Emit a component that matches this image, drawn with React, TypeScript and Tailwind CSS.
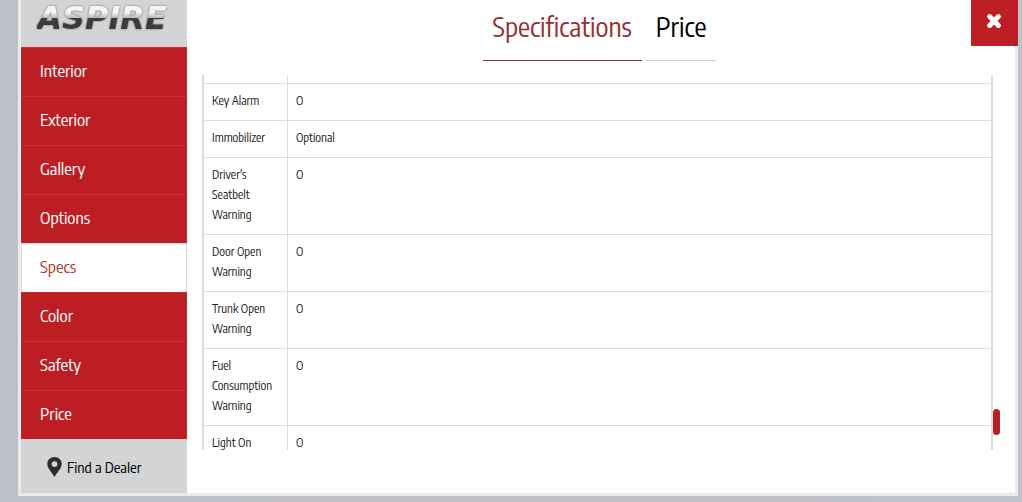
import { useState } from "react";

const sections = ["Interior", "Exterior", "Gallery", "Options", "Specs", "Color", "Safety", "Price"];
const tabs = ["Specifications", "Price"];

const specs = [
  { name: "Key Alarm", value: "O" },
  { name: "Immobilizer", value: "Optional" },
  { name: "Driver's Seatbelt Warning", value: "O" },
  { name: "Door Open Warning", value: "O" },
  { name: "Trunk Open Warning", value: "O" },
  { name: "Fuel Consumption Warning", value: "O" },
  { name: "Light On", value: "O" },
];

function Sidebar() {
  const [active, setActive] = useState("Specs");
  return (
    <aside className="flex w-[166px] shrink-0 flex-col bg-[#d2d4d5]">
      <div className="flex h-[47px] items-start justify-center">
        <span className="bg-linear-to-b from-[#f4f4f4] from-35% via-[#b4b6b8] via-50% to-[#3b3c3e] to-50% bg-clip-text pr-1 font-['DejaVu_Sans',sans-serif] text-[32px] leading-9 font-bold text-transparent italic drop-shadow-[0_0_1px_#707274]">
          ASPIRE
        </span>
      </div>
      <nav aria-label="Sections">
        {sections.map((name) => (
          <a
            key={name}
            href={"#" + name.toLowerCase()}
            onClick={() => setActive(name)}
            className={
              name === active
                ? "flex h-[49px] items-center border-x border-t border-[#dcdcdc] bg-white px-[18px] pb-0.5 text-[17px] text-[#b23a2e]"
                : "flex h-[49px] items-center border-x border-t border-[#b82a2a] border-t-[#d42c27] bg-[#bd1e23] px-[18px] pb-0.5 text-[17px] text-white"
            }
          >
            {name}
          </a>
        ))}
      </nav>
      <a href="#dealer" className="flex flex-1 items-center gap-[5px] pt-0.5 pl-[26px] text-[15px] text-black">
        <svg width="15" height="20" viewBox="0 0 15 20" aria-hidden="true">
          <path
            d="M7.5 0C3.3 0 .3 3.100 .3 7c0 4.500 4.500 8 7.200 13C10.200 15 14.700 11.500 14.700 7c0-3.900-3-7-7.200-7zm0 4.200a2.900 2.900 0 1 1 0 5.800 2.900 2.900 0 0 1 0-5.800z"
            fill="#2d2d2d"
          />
        </svg>
        Find a Dealer
      </a>
    </aside>
  );
}

function SpecTable() {
  return (
    <div className="relative mx-[15px] mb-[43px] min-h-0 flex-1 pr-[7px]">
      <div className="h-full overflow-hidden">
        <table className="w-full border-separate border-spacing-0 border-x-2 border-[#dcdcdc] text-left text-xs leading-5 text-[#202020]">
          <tbody>
            <tr className="h-[9px]">
              <th className="w-[84px] border-r border-b border-[#dcdcdc] p-0" />
              <td className="border-b border-[#dcdcdc] p-0" />
            </tr>
            {specs.map((spec) => (
              <tr key={spec.name}>
                <th scope="row" className="w-[84px] border-r border-b border-[#dcdcdc] px-2 pt-[7px] pb-[9px] align-top font-normal">
                  {spec.name}
                </th>
                <td className="border-b border-[#dcdcdc] px-2 pt-[7px] pb-[9px] align-top">{spec.value}</td>
              </tr>
            ))}
          </tbody>
        </table>
      </div>
      <div className="absolute right-0 bottom-[15px] h-[26px] w-[7px] rounded-sm bg-[#b51f24]" />
    </div>
  );
}

export default function App() {
  const [tab, setTab] = useState("Specifications");
  return (
    <div className="h-screen bg-linear-to-r from-[#bcc1c9] via-[#c0bfc4] to-[#bfc2ca] pr-1 pb-1.5 pl-[18px] font-['Encode_Sans_Condensed','Open_Sans_Condensed_Light','Liberation_Sans_Narrow',sans-serif]">
      <div className="relative flex h-full border-x-3 border-b-3 border-[#ebebeb] bg-white">
        <Sidebar />
        <main className="flex min-w-0 flex-1 flex-col">
          <div role="tablist" className="flex h-[75px] items-start justify-center gap-1 pr-[3px]">
            {tabs.map((name) => (
              <button
                key={name}
                type="button"
                role="tab"
                aria-selected={tab === name}
                onClick={() => setTab(name)}
                className={
                  tab === name
                    ? "h-[61px] cursor-pointer border-b border-[#8f3330] px-2.5 pb-[9px] text-[27px] leading-9 text-[#96302e]"
                    : "h-[61px] cursor-pointer border-b border-[#cccccc] px-2.5 pb-[9px] text-[27px] leading-9 text-black"
                }
              >
                {name}
              </button>
            ))}
          </div>
          <SpecTable />
        </main>
        <button
          type="button"
          aria-label="Close"
          className="absolute top-0 -right-[3px] flex h-[46px] w-[47px] cursor-pointer items-center justify-center bg-[#bd1e23] pr-0.5 pb-1"
        >
          <svg width="16" height="16" viewBox="0 0 16 16" aria-hidden="true">
            <path d="M3.600 3.600l8.800 8.800M12.400 3.600l-8.800 8.800" stroke="#fff" strokeWidth="5" strokeLinecap="round" />
          </svg>
        </button>
      </div>
    </div>
  );
}
